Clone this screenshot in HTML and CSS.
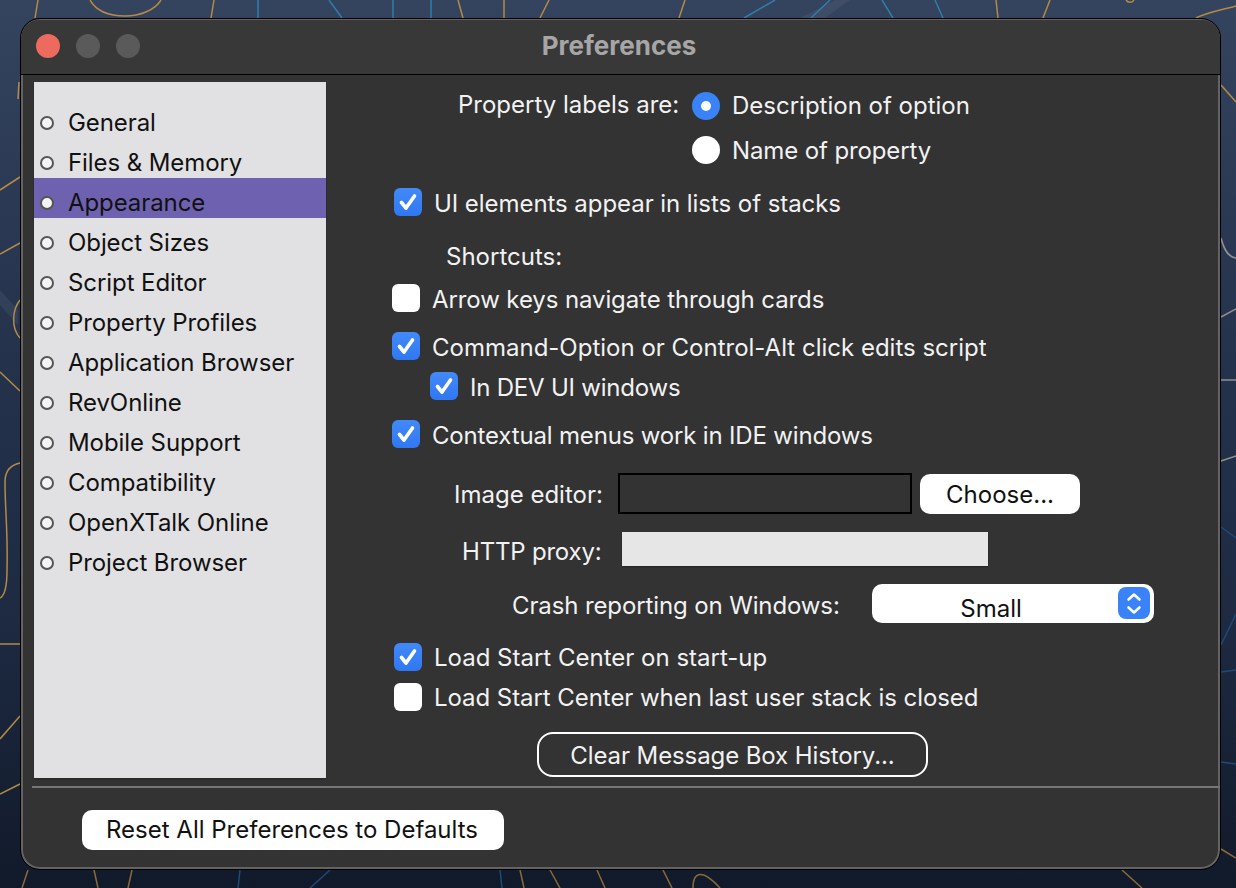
FILE: index.html
```html
<!DOCTYPE html>
<html lang="en">
<head>
    <meta charset="UTF-8">
    <meta name="viewport" content="width=device-width, initial-scale=1.0">
    <title>Preferences</title>
    <link rel="stylesheet" href="styles.css">
</head>
<body>
    <!-- desktop wallpaper -->
    <svg class="wallpaper" width="1236" height="888" viewBox="0 0 1236 888" fill="none">
        <path d="M800 18L835 0L850 0L825 18Z" fill="#4a5870" opacity="0.5"/>
        <path d="M0 290L18 310L18 325L0 305Z" fill="#4a5870" opacity="0.35"/>
        <g stroke="#b58a45" stroke-width="1.5">
            <path d="M38 0L35 18"/>
            <path d="M90 0C97 12 110 16 125 16C140 16 155 10 161 0"/>
            <path d="M214 0L211 18"/>
            <path d="M458 0L463 18"/>
            <path d="M504 0L504 18"/>
            <path d="M549 0L540 18"/>
            <path d="M685 0L679 18"/>
            <path d="M996 0L998 18"/>
            <path d="M1050 0L1043 18"/>
            <path d="M1126 0C1128 3 1132 3 1134 0"/>
            <path d="M1196 18C1208 12 1222 10 1236 6"/>
            <path d="M19 82L18 99"/>
            <path d="M0 190L20 177"/>
            <path d="M0 254L20 243"/>
            <path d="M20 300C12 310 11 328 20 338"/>
            <path d="M0 372L20 391"/>
            <path d="M20 463C10 465 5 472 5 482C5 510 8 530 7 570C7 590 4 596 0 598"/>
            <path d="M0 644L20 644"/>
            <path d="M0 739L20 716"/>
            <path d="M0 794L20 784"/>
            <path d="M1221 85L1236 102"/>
        </g>
        <g stroke="#8f8f8f" stroke-width="1.5">
            <path d="M1221 238C1224 250 1228 257 1236 258"/>
            <path d="M1221 317L1236 309"/>
            <path d="M1221 380L1236 380"/>
            <path d="M1221 461L1236 456"/>
        </g>
        <g stroke="#2f7ea8" stroke-width="1.5">
            <path d="M258 0L258 18"/>
            <path d="M329 0L342 18"/>
            <path d="M393 0L393 18"/>
            <path d="M431 0L431 18"/>
            <path d="M775 0L744 18"/>
            <path d="M830 0L811 18"/>
            <path d="M882 0L893 18"/>
            <path d="M935 0L943 18"/>
        </g>
        <g stroke="#1f4a78" stroke-width="1.5">
            <path d="M1221 527L1236 538"/>
            <path d="M1221 645L1236 614"/>
            <path d="M1221 672L1236 670"/>
            <path d="M1221 762L1236 764"/>
            <path d="M240 870L238 888"/>
            <path d="M330 870L310 888"/>
            <path d="M500 870L502 888"/>
        </g>
        <g stroke="#8c6a38" stroke-width="1.5">
            <path d="M28 870L22 888"/>
            <path d="M94 870L98 888"/>
            <path d="M132 870L128 888"/>
            <path d="M520 870L524 888"/>
            <path d="M550 870L560 888"/>
            <path d="M597 870L605 888"/>
            <path d="M663 870L672 888"/>
            <path d="M693 888C693 872 702 868 720 888"/>
            <path d="M1122 870L1142 888"/>
            <path d="M1221 849L1236 858"/>
        </g>
    </svg>

    <div class="window">
        <div class="titlebar">
            <div class="lights">
                <span class="light light-close"></span>
                <span class="light"></span>
                <span class="light"></span>
            </div>
            <div class="title">Preferences</div>
        </div>

        <div class="main">
            <ul class="sidebar">
                <li class="nav-item"><span class="bullet"></span>General</li>
                <li class="nav-item"><span class="bullet"></span>Files &amp; Memory</li>
                <li class="nav-item selected"><span class="bullet"></span>Appearance</li>
                <li class="nav-item"><span class="bullet"></span>Object Sizes</li>
                <li class="nav-item"><span class="bullet"></span>Script Editor</li>
                <li class="nav-item"><span class="bullet"></span>Property Profiles</li>
                <li class="nav-item"><span class="bullet"></span>Application Browser</li>
                <li class="nav-item"><span class="bullet"></span>RevOnline</li>
                <li class="nav-item"><span class="bullet"></span>Mobile Support</li>
                <li class="nav-item"><span class="bullet"></span>Compatibility</li>
                <li class="nav-item"><span class="bullet"></span>OpenXTalk Online</li>
                <li class="nav-item"><span class="bullet"></span>Project Browser</li>
            </ul>

            <div class="panel">
                <div class="row row-labels">
                    <span class="label-prop">Property labels are:</span>
                    <span class="radio radio-on"></span>
                    <span class="radio-text">Description of option</span>
                </div>
                <div class="row row-name">
                    <span class="radio"></span>
                    <span class="radio-text">Name of property</span>
                </div>
                <div class="row row-ui">
                    <span class="check check-on"><svg viewBox="0 0 28 28" width="28" height="28"><path d="M7.5 14.5L12 20L20.5 8" fill="none" stroke="#fff" stroke-width="3.6" stroke-linecap="round" stroke-linejoin="round"/></svg></span>
                    <span class="check-text">UI elements appear in lists of stacks</span>
                </div>
                <div class="row row-shortcuts"><span class="check-text">Shortcuts:</span></div>
                <div class="row row-arrow">
                    <span class="check"></span>
                    <span class="check-text">Arrow keys navigate through cards</span>
                </div>
                <div class="row row-command">
                    <span class="check check-on"><svg viewBox="0 0 28 28" width="28" height="28"><path d="M7.5 14.5L12 20L20.5 8" fill="none" stroke="#fff" stroke-width="3.6" stroke-linecap="round" stroke-linejoin="round"/></svg></span>
                    <span class="check-text">Command-Option or Control-Alt click edits script</span>
                </div>
                <div class="row row-dev">
                    <span class="check check-on"><svg viewBox="0 0 28 28" width="28" height="28"><path d="M7.5 14.5L12 20L20.5 8" fill="none" stroke="#fff" stroke-width="3.6" stroke-linecap="round" stroke-linejoin="round"/></svg></span>
                    <span class="check-text">In DEV UI windows</span>
                </div>
                <div class="row row-context">
                    <span class="check check-on"><svg viewBox="0 0 28 28" width="28" height="28"><path d="M7.5 14.5L12 20L20.5 8" fill="none" stroke="#fff" stroke-width="3.6" stroke-linecap="round" stroke-linejoin="round"/></svg></span>
                    <span class="check-text">Contextual menus work in IDE windows</span>
                </div>
                <div class="row row-image">
                    <span class="field-label">Image editor:</span>
                    <span class="field-dark"></span>
                    <button class="btn btn-choose">Choose...</button>
                </div>
                <div class="row row-proxy">
                    <span class="field-label">HTTP proxy:</span>
                    <span class="field-light"></span>
                </div>
                <div class="row row-crash">
                    <span class="crash-label">Crash reporting on Windows:</span>
                    <div class="select">
                        <span class="select-value">Small</span>
                        <span class="select-arrows"><svg viewBox="0 0 32 32" width="32" height="32" fill="none" stroke="#fff" stroke-width="2.6" stroke-linecap="round" stroke-linejoin="round"><path d="M10.5 12.5L16 7.5L21.5 12.5"/><path d="M10.5 20.5L16 25.5L21.5 20.5"/></svg></span>
                    </div>
                </div>
                <div class="row row-start">
                    <span class="check check-on"><svg viewBox="0 0 28 28" width="28" height="28"><path d="M7.5 14.5L12 20L20.5 8" fill="none" stroke="#fff" stroke-width="3.6" stroke-linecap="round" stroke-linejoin="round"/></svg></span>
                    <span>Load Start Center on start-up</span>
                </div>
                <div class="row row-last">
                    <span class="check"></span>
                    <span>Load Start Center when last user stack is closed</span>
                </div>
                <div class="row row-clear">
                    <button class="btn-outline">Clear Message Box History...</button>
                </div>
            </div>
        </div>

        <div class="footer">
            <button class="btn btn-reset">Reset All Preferences to Defaults</button>
        </div>
    </div>
</body>
</html>
```

FILE: styles.css
```css
* {
    box-sizing: border-box;
}
body {
    margin: 0;
    width: 1236px;
    height: 888px;
    overflow: hidden;
    padding: 18px 0 0 20px;
    background: linear-gradient(180deg, #34435e 0%, #24324c 40%, #1d2a42 70%, #111a2a 100%);
    font-family: Inter, "Noto Sans", sans-serif;
    font-size: 24px;
    color: #f2f2f2;
}
.wallpaper {
    position: absolute;
    left: 0;
    top: 0;
}
.window {
    position: relative;
    width: 1201px;
    height: 852px;
    background: #333333;
    border: 1px solid #000;
    border-radius: 20px;
    box-shadow: inset 0 0 0 2px #636363;
    overflow: hidden;
    display: flex;
    flex-direction: column;
}
.titlebar {
    height: 55px;
    flex-shrink: 0;
    background: #383838;
    border-bottom: 1px solid #000;
    display: flex;
    align-items: center;
    position: relative;
    margin: 1px 0 0;
    border-radius: 18px 18px 0 0;
}
.lights {
    display: flex;
    gap: 16px;
    padding-left: 15px;
    margin-top: -2px;
}
.light {
    width: 24px;
    height: 24px;
    border-radius: 50%;
    background: #5a5a5a;
}
.light-close {
    background: #ec6a5e;
}
.title {
    position: absolute;
    left: 0;
    right: 3px;
    margin-top: -4px;
    text-align: center;
    font-weight: 700;
    font-size: 26px;
    color: #a6a6a6;
}
.main {
    flex: 1;
    display: flex;
    padding: 7px 0 0 13px;
}
.sidebar {
    list-style: none;
    margin: 0;
    padding: 16px 0 0;
    width: 292px;
    height: 696px;
    background: #e1e1e3;
    color: #111;
    letter-spacing: -0.08px;
    box-shadow: 0 1px 2px rgba(0, 0, 0, 0.3);
}
.nav-item {
    height: 40px;
    display: flex;
    align-items: center;
    padding: 8px 0 0 6px;
}
.nav-item.selected {
    background: #6e62b0;
}
.bullet {
    width: 14px;
    height: 14px;
    border-radius: 50%;
    background: #f4f4f4;
    border: 2px solid #555;
    margin-right: 14px;
    margin-top: 2px;
}
.panel {
    flex: 1;
    display: flex;
    flex-direction: column;
}
.row {
    display: flex;
    align-items: center;
    flex-shrink: 0;
    height: 40px;
}
.radio {
    width: 28px;
    height: 28px;
    border-radius: 50%;
    background: #fff;
    flex-shrink: 0;
    margin-right: 12px;
}
.radio-on {
    background: #3a82f7;
    position: relative;
}
.radio-on::after {
    content: "";
    position: absolute;
    left: 9px;
    top: 9px;
    width: 10px;
    height: 10px;
    border-radius: 50%;
    background: #fff;
}
.check {
    width: 28px;
    height: 28px;
    border-radius: 6px;
    background: #fff;
    flex-shrink: 0;
    margin-right: 12px;
}
.check-on {
    background: linear-gradient(#4289f8, #2f78f2);
}
.check svg {
    display: block;
}
.check-text {
    margin-top: 2px;
}
.row-labels {
    margin-top: 4px;
    padding-left: 132px;
}
.row-labels .radio-text {
    margin-top: -2px;
}
.label-prop {
    width: 234px;
    margin-top: -3px;
}
.row-name {
    margin-top: 4px;
    padding-left: 366px;
    letter-spacing: -0.12px;
}
.row-ui {
    margin-top: 12px;
    padding-left: 68px;
    letter-spacing: -0.06px;
}
.row-shortcuts {
    margin-top: 13px;
    padding-left: 120px;
}
.row-arrow {
    margin-top: 3px;
    padding-left: 66px;
    letter-spacing: -0.1px;
}
.row-command {
    margin-top: 8px;
    padding-left: 66px;
}
.row-dev {
    padding-left: 104px;
    letter-spacing: -0.22px;
}
.row-context {
    margin-top: 8px;
    padding-left: 66px;
    letter-spacing: -0.17px;
}
.row-image {
    margin-top: 20px;
    padding-left: 128px;
}
.field-label {
    width: 164px;
}
.field-dark {
    width: 294px;
    height: 41px;
    border: 2px solid #000;
    margin-top: -1px;
    margin-right: 8px;
}
.btn {
    height: 40px;
    border: none;
    border-radius: 10px;
    background: #fff;
    color: #111;
    font-family: inherit;
    font-size: 24px;
    padding: 0;
}
.btn-choose {
    width: 160px;
}
.row-proxy {
    margin-top: 15px;
    padding-left: 136px;
    letter-spacing: -0.2px;
}
.row-proxy .field-label {
    width: 160px;
    margin-top: 4px;
}
.field-light {
    width: 366px;
    height: 34px;
    background: #e6e6e6;
    box-shadow: 0 1px 2px rgba(0, 0, 0, 0.3);
}
.row-crash {
    margin-top: 15px;
    padding-left: 186px;
}
.crash-label {
    width: 360px;
    margin-top: 2px;
    letter-spacing: -0.12px;
}
.select {
    width: 282px;
    height: 39px;
    align-self: flex-start;
    background: #fff;
    border-radius: 10px;
    color: #111;
    display: flex;
    align-items: flex-start;
    padding: 3px 4px 0 0;
}
.select-value {
    flex: 1;
    text-align: center;
    margin-top: 7px;
    padding-right: 8px;
}
.select-arrows {
    width: 32px;
    height: 32px;
    border-radius: 8px;
    background: #3a82f7;
}
.select-arrows svg {
    display: block;
}
.row-start {
    margin-top: 13px;
    padding-left: 68px;
}
.row-last {
    padding-left: 68px;
    letter-spacing: -0.06px;
}
.row-clear {
    height: 45px;
    margin-top: 15px;
    padding-left: 211px;
}
.btn-outline {
    width: 391px;
    height: 45px;
    border: 2px solid #fff;
    border-radius: 16px;
    background: transparent;
    color: #f2f2f2;
    font-family: inherit;
    font-size: 24px;
    letter-spacing: -0.1px;
    padding: 2px 0 0;
}
.footer {
    margin-left: 11px;
    border-top: 2px solid #777;
    height: 83px;
    flex-shrink: 0;
    padding: 22px 0 0 50px;
}
.btn-reset {
    width: 422px;
    padding: 0 2px 2px 0;
}
```
